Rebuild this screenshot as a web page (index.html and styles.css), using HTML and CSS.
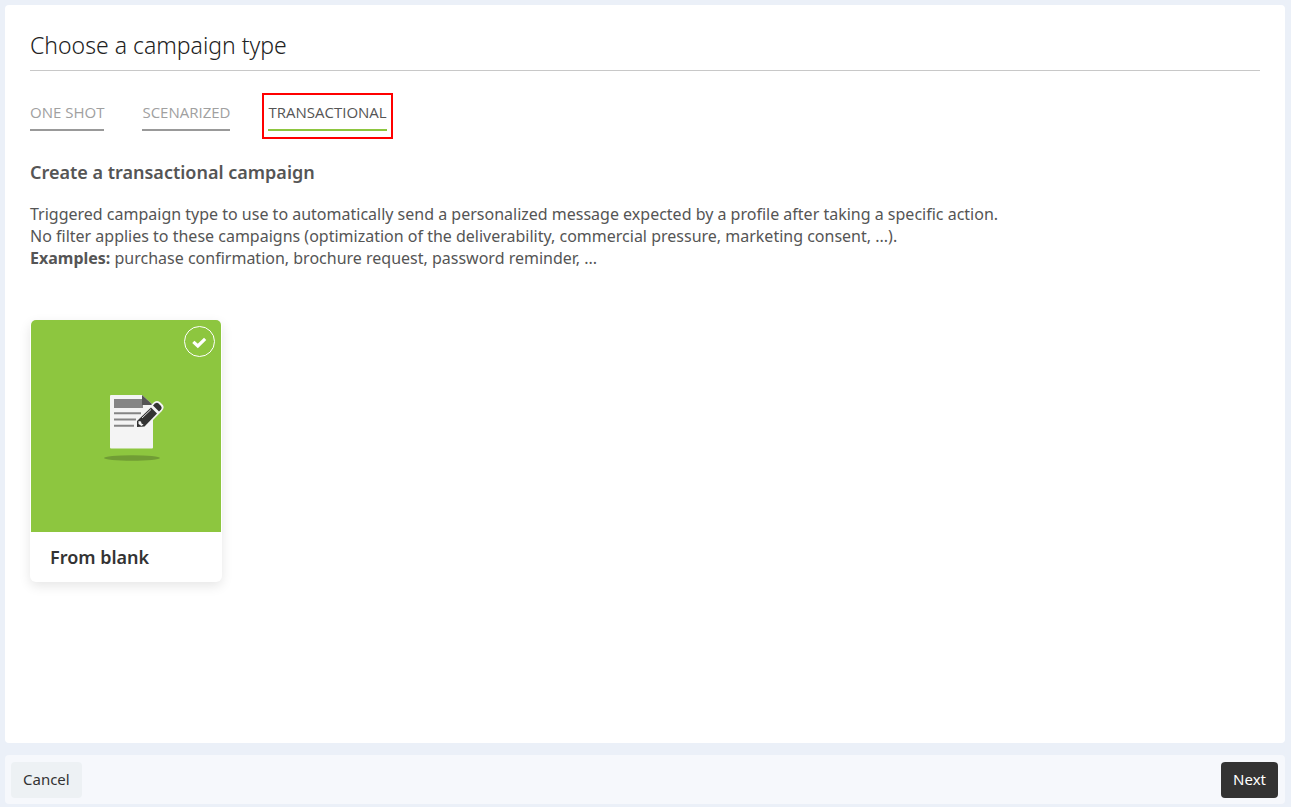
FILE: index.html
```html
<!DOCTYPE html>
<html lang="en">
<head>
<meta charset="utf-8">
<meta name="viewport" content="width=device-width, initial-scale=1">
<title>Choose a campaign type</title>
<link rel="stylesheet" href="styles.css">
</head>
<body class="page">
<main class="panel">
  <h1 class="title">Choose a campaign type</h1>
  <nav class="tabs" role="tablist">
    <button class="tab" type="button" role="tab" aria-selected="false"><span class="tab-label">ONE SHOT</span></button>
    <button class="tab" type="button" role="tab" aria-selected="false"><span class="tab-label">SCENARIZED</span></button>
    <button class="tab tab-active" type="button" role="tab" aria-selected="true"><span class="tab-label">TRANSACTIONAL</span></button>
  </nav>
  <h2 class="subtitle">Create a transactional campaign</h2>
  <p class="description">Triggered campaign type to use to automatically send a personalized message expected by a profile after taking a specific action.<br>No filter applies to these campaigns (optimization of the deliverability, commercial pressure, marketing consent, ...).<br><strong class="strong">Examples:</strong> purchase confirmation, brochure request, password reminder, ...</p>
  <button class="card" type="button" aria-pressed="true">
    <span class="card-art">
      <svg class="card-icon" viewBox="0 0 60 68" aria-hidden="true">
        <ellipse cx="28" cy="64" rx="28" ry="2.800" fill="#719d35"/>
        <path d="M7 1H38L49 11V53.500Q49 54.500 48 54.500H7Q6 54.500 6 53.500V2Q6 1 7 1Z" fill="#f4f4f4"/>
        <path d="M10 5H39V14H10Z" fill="#858585"/>
        <path d="M38 1L49 11H38Z" fill="#555"/>
        <path d="M10 19.300H37M10 25.500H32M10 31.800H30" stroke="#858585" stroke-width="2"/>
        <path d="M33 27L49 11L51 9Q53 7.500 55 9L58 12Q59 14 57 16L41 32.500L33 33Z" fill="#f4f4f4" stroke="#f4f4f4" stroke-width="2.500" stroke-linejoin="round"/>
        <path d="M33 27L47 13.500L53 19.500L40.500 32.500L33 33Z" fill="#333"/>
        <path d="M49 11.500L51 9.500Q53 8 54.500 9.500L57 12Q58.500 14 57 15.500L55 17.500Z" fill="#333"/>
        <path d="M38 24L47 15.500" stroke="#ddd" stroke-width="1"/>
        <path d="M34.500 27L37 27.500L37.500 29.500L39.500 30.500L37.500 32L34.500 30Z" fill="#f4f4f4"/>
      </svg>
      <svg class="card-check" viewBox="0 0 31 31" aria-hidden="true">
        <circle cx="15.500" cy="15.500" r="15" fill="none" stroke="#fff"/>
        <path d="M10.500 17L13.800 20L20 14" fill="none" stroke="#fff" stroke-width="3.200" stroke-linecap="square"/>
      </svg>
    </span>
    <span class="card-name">From blank</span>
  </button>
</main>
<footer class="footer">
  <button class="button" type="button">Cancel</button>
  <button class="button button-primary" type="button">Next</button>
</footer>
</body>
</html>
```
FILE: styles.css
```css
* { box-sizing: border-box; }
.page {
  margin: 0;
  min-height: 100vh;
  padding: 5px 6px 3px 5px;
  display: flex;
  flex-direction: column;
  gap: 12px;
  background: #ebf0f8;
  color: #555;
  font-family: "Noto Sans", "Open Sans", sans-serif;
}
button { font-family: inherit; cursor: pointer; }
.panel {
  flex: 1;
  padding: 24px 25px;
  background: #fff;
  border-radius: 4px;
}
.title {
  margin: 0;
  padding-bottom: 8px;
  border-bottom: 1px solid #c8c8c8;
  color: #222;
  font-size: 23px;
  line-height: 33px;
  font-weight: 300;
}
.tabs {
  display: flex;
  gap: 26px;
  margin: 22px 0 0 -6px;
}
.tab {
  padding: 4px 4px 6px;
  border: 2px solid transparent;
  background: none;
  color: #a0a0a0;
  font-family: "Open Sans", sans-serif;
  font-size: 15px;
  line-height: 26px;
  font-weight: 400;
}
.tab-label {
  display: block;
  padding-bottom: 4px;
  border-bottom: 2px solid #999;
}
.tab-active { border-color: #f00; color: #555; }
.tab-active .tab-label { border-color: #8dc63f; }
.subtitle {
  margin: 21px 0 0;
  font-size: 18px;
  line-height: 24px;
  font-weight: 600;
}
.description {
  margin: 19px 0 0;
  font-size: 16px;
  line-height: 22px;
}
.strong { font-weight: 700; }
.card {
  display: block;
  width: 192px;
  margin-top: 51px;
  padding: 0;
  border: 0;
  border-radius: 6px;
  background: #fff;
  box-shadow: 0 4px 12px rgba(0, 0, 0, 0.1);
  text-align: left;
}
.card-art {
  position: relative;
  display: block;
  height: 212px;
  margin: 0 1px;
  padding: 74px 0 0 73px;
  border-radius: 5px 5px 0 0;
  background: #8dc63f;
}
.card-icon { display: block; width: 60px; height: 68px; }
.card-check {
  position: absolute;
  top: 6px;
  right: 6px;
  width: 31px;
  height: 31px;
}
.card-name {
  display: block;
  padding: 13px 20px;
  color: #333;
  font-size: 18px;
  line-height: 24px;
  font-weight: 600;
}
.footer {
  display: flex;
  justify-content: space-between;
  padding: 7px 7px 6px 6px;
  border-radius: 4px;
  background: #f6f8fc;
}
.button {
  padding: 6px 12px 8px;
  border: 0;
  border-radius: 4px;
  background: #edf1f4;
  color: #333;
  font-size: 15px;
  line-height: 22px;
}
.button-primary { background: #333; color: #fff; }
```
